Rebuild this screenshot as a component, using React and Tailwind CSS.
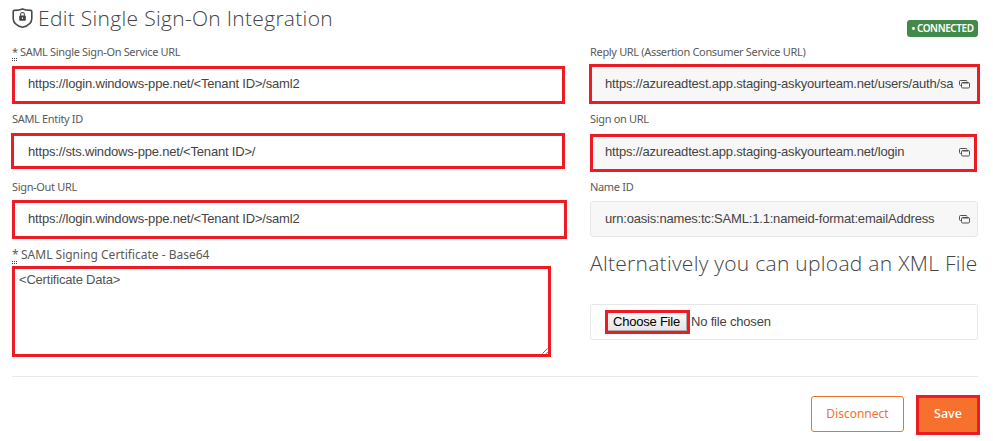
import React from "react";

function CopyIcon() {
  return (
    <svg className="h-[9px] w-[11px] shrink-0" viewBox="0 0 11 9" fill="none" stroke="#505050">
      <path d="M1.8 5.5H1.5Q.5 5.5 .5 4.5V1.5Q.5.5 1.5.5H7Q8 .5 8 1.5" />
      <rect x="2.5" y="2.5" width="8" height="5.5" rx="1.2" />
      <path d="M3.5 3H9.5" />
    </svg>
  );
}

function ShieldIcon() {
  return (
    <svg className="mt-2 h-[20px] w-[21px] shrink-0" viewBox="0 0 21 20" fill="none">
      <path
        d="M10.5 .9C8 2 5 2.3 2.4 2.4Q1.2 2.5 1.2 3.7V10.5C1.2 15 5.2 18 10.5 19.2C15.8 18 19.8 15 19.8 10.5V3.7Q19.8 2.5 18.6 2.4C16 2.3 13 2 10.5 .9Z"
        stroke="#4a4a4a"
        strokeWidth="1.6"
      />
      <rect x="7.2" y="7.6" width="6.6" height="5.2" rx=".8" fill="#444" />
      <path d="M8.6 7.7V6.4a1.9 1.9 0 0 1 3.8 0V7.7" stroke="#444" strokeWidth="1.1" />
      <path d="M10.5 9.4v1.6" stroke="#fff" />
    </svg>
  );
}

function Required() {
  return (
    <span className="mr-[3px] h-[15px] w-[5px] shrink-0 border-b border-dotted border-[#444]">
      <span className="block h-[17px] border-b border-dotted border-[#444]">*</span>
    </span>
  );
}

const label = "flex h-4 items-start whitespace-nowrap font-['Noto_Sans',sans-serif] leading-4 text-[#5a5a5a]";
const small = "text-[11px] tracking-[-0.33px]";
const field = "flex items-center whitespace-nowrap text-[13px] tracking-[-0.19px] text-[#444]";

export default function App() {
  return (
    <div className="h-[441px] w-[993px] overflow-hidden bg-white font-['Liberation_Sans',Arial,sans-serif]">
      <div className="flex h-[376px]">
        <div className="w-[577px] pl-3">
          <div className="flex h-11">
            <ShieldIcon />
            <h1 className="ml-[5px] whitespace-nowrap font-['Open_Sans',sans-serif] text-[21px] font-light leading-[37px] tracking-[0.3px] text-[#444]">
              Edit Single Sign-On Integration
            </h1>
          </div>
          <div className={`${label} ${small}`}>
            <Required />
            <span>SAML Single Sign-On Service URL</span>
          </div>
          <div className={`${field} mt-[6px] h-[38px] w-[553px] border-3 border-[#ed1c24] pb-[2px] pl-[13px]`}>
            https://login.windows-ppe.net/&lt;Tenant ID&gt;/saml2
          </div>
          <div className={`${label} ${small} mt-[7px]`}>SAML Entity ID</div>
          <div className={`${field} -ml-px mt-[6px] h-9 w-[554px] border-3 border-[#ed1c24] pl-[14px] pt-[2px]`}>
            https://sts.windows-ppe.net/&lt;Tenant ID&gt;/
          </div>
          <div className={`${label} ${small} mt-[10px]`}>Sign-Out URL</div>
          <div className={`${field} mt-[5px] h-[39px] w-[555px] border-3 border-[#ed1c24] pb-[2px] pl-[13px]`}>
            https://login.windows-ppe.net/&lt;Tenant ID&gt;/saml2
          </div>
          <div className={`${label} mt-[8px] text-[12px]`}>
            <Required />
            <span className="ml-px">SAML Signing Certificate - Base64</span>
          </div>
          <div className="mt-[3px] flex h-[91px] w-[539px] items-end justify-between border-3 border-[#ed1c24] pl-1">
            <span className="self-start pt-[3px] text-[13px] leading-4 tracking-[-0.2px] text-[#555]">&lt;Certificate Data&gt;</span>
            <svg className="size-[6px]" viewBox="0 0 6 6" stroke="#555" strokeWidth=".9">
              <path d="M.5 5.5 5.5 .5M4 5.8 5.8 4" />
            </svg>
          </div>
        </div>

        <div className="w-[416px] pl-[13px]">
          <div className="flex h-11 w-[388px] items-start justify-end pt-5">
            <div className="flex h-[17px] w-[71px] items-center justify-center whitespace-nowrap rounded-[3px] bg-[#43894a] font-['Noto_Sans',sans-serif] text-[10px] font-semibold tracking-[-0.42px] text-white">
              • CONNECTED
            </div>
          </div>
          <div className={`${label} ${small}`}>Reply URL (Assertion Consumer Service URL)</div>
          <div className={`${field} -ml-px mt-1 h-10 w-[391px] border-3 border-[#ed1c24] bg-[#f7f7f7] pl-[13px]`}>
            <span className="w-[350px]">https://azureadtest.app.staging-askyourteam.net/users/auth/sa</span>
            <span className="ml-1"><CopyIcon /></span>
          </div>
          <div className={`${label} ${small} mt-[7px]`}>Sign on URL</div>
          <div className={`${field} mt-[7px] h-[38px] w-[387px] border-3 border-[#ed1c24] bg-[#f7f7f7] pb-[2px] pl-3`}>
            <span className="w-[350px]">https://azureadtest.app.staging-askyourteam.net/login</span>
            <span className="ml-1"><CopyIcon /></span>
          </div>
          <div className={`${label} ${small} mt-[7px]`}>Name ID</div>
          <div className={`${field} mt-[6px] h-9 w-[388px] rounded-[3px] border border-[#e7e7e7] bg-[#f7f7f7] pl-[14px]`}>
            <span className="w-[350px]">urn:oasis:names:tc:SAML:1.1:nameid-format:emailAddress</span>
            <span className="ml-1"><CopyIcon /></span>
          </div>
          <h2 className="mt-[11px] h-14 whitespace-nowrap font-['Open_Sans',sans-serif] text-[21px] font-light leading-[31px] tracking-[0.28px] text-[#444]">
            Alternatively you can upload an XML File
          </h2>
          <div className={`${field} h-9 w-[388px] rounded-[3px] border border-[#e7e7e7] pl-[14px]`}>
            <button className="h-6 w-[85px] border-3 border-[#ed1c24] bg-linear-to-b from-[#f8f8f8] to-[#e5e5e5] pr-[2px] text-[13px] leading-[18px] tracking-[-0.22px] text-black shadow-[inset_-1px_-1px_0_#aaa]">
              Choose File
            </button>
            <span className="ml-px">No file chosen</span>
          </div>
        </div>
      </div>

      <div className="ml-3 flex h-[60px] w-[968px] items-start justify-end">
        <div className="flex w-full justify-end bg-[linear-gradient(#e9e9e9,#e9e9e9)] bg-[length:966px_1px] bg-no-repeat pt-[19px]">
          <button className="mt-px h-9 w-[93px] rounded-[3px] border border-[#f36f2c] font-['Noto_Sans',sans-serif] text-[12px] text-[#f36f2c]">
            Disconnect
          </button>
          <button className="ml-3 h-10 w-16 border-3 border-[#ed1c24] bg-[#f5712d] pb-[2px] font-['Noto_Sans',sans-serif] text-[12.5px] font-medium text-white">
            Save
          </button>
        </div>
      </div>
    </div>
  );
}
